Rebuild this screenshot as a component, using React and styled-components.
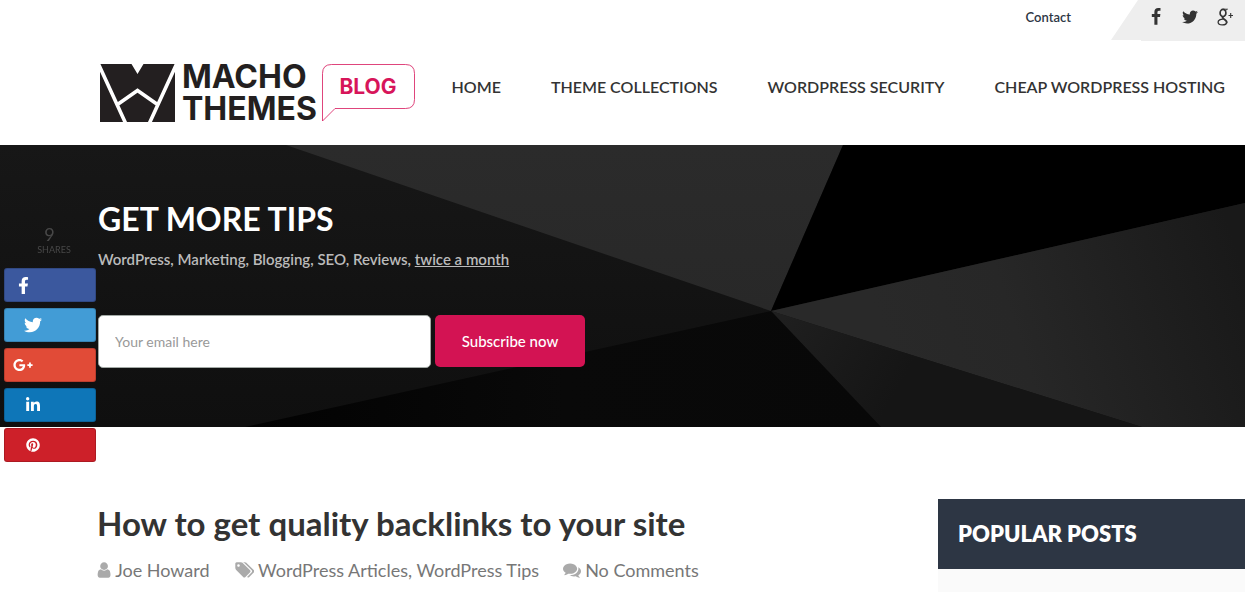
import React from "react";
import styled, { createGlobalStyle } from "styled-components";
import { FaFacebookF, FaTwitter, FaGooglePlusG, FaLinkedinIn, FaPinterest } from "react-icons/fa";

const GlobalStyle = createGlobalStyle`
  *, *::before, *::after { box-sizing: border-box; }
  body {
    margin: 0;
    background: #fff;
    color: #333;
    font-family: Lato, "Open Sans", sans-serif;
    overflow-x: hidden;
  }
  a { color: inherit; text-decoration: none; }
  h1, h2, p, ul { margin: 0; padding: 0; }
  ul { list-style: none; }
`;

const TopBar = styled.div`
  display: flex;
  justify-content: flex-end;
  align-items: flex-start;
  height: 41px;
`;

const ContactLink = styled.a`
  margin-right: 40px;
  font-size: 13px;
  line-height: 34px;
  font-weight: 600;
  color: #2d3644;
`;

const SocialStrip = styled.div`
  display: flex;
  align-items: center;
  gap: 12px;
  width: 134px;
  height: 41px;
  padding: 0 8px 7px 34px;
  background: #eee;
  clip-path: polygon(27px 0, 100% 0, 100% 100%, 30px 100%, 30px 40px, 0 40px);
`;

const SocialLink = styled.a`
  display: flex;
  justify-content: center;
  width: 22px;
  svg { width: 18px; height: 18px; fill: #333; }
`;

const Header = styled.header`
  display: flex;
  align-items: center;
  justify-content: space-between;
  height: 104px;
  padding: 0 20px 0 100px;
`;

const Logo = styled.a`
  display: flex;
  align-items: flex-start;
  padding-top: 2px;
`;

const LogoMark = styled.svg`
  width: 75px;
  height: 58px;
`;

const LogoName = styled.span`
  display: flex;
  flex-direction: column;
  width: 139px;
  margin-top: -3px;
  padding-left: 7px;
  font: 700 32px/32px Inter, sans-serif;
  color: #231f20;
`;

const BlogBubble = styled.svg`
  width: 93px;
  height: 58px;
  margin-left: 8px;
  text { font: 700 21px Inter, sans-serif; fill: #d7155a; }
`;

const Nav = styled.nav`
  display: flex;
  gap: 50px;
  font-size: 16px;
  line-height: 24px;
  font-weight: 600;
  white-space: nowrap;
  padding-bottom: 12px;
`;

const Hero = styled.section`
  position: relative;
  height: 282px;
  padding: 52px 98px 0;
  background: #131313;
  color: #fff;
`;

const HeroArt = styled.svg`
  position: absolute;
  inset: 0;
  width: 100%;
  height: 100%;
`;

const HeroBody = styled.div`
  position: relative;
`;

const HeroTitle = styled.h2`
  font-size: 32px;
  line-height: 44px;
  font-weight: 700;
`;

const HeroText = styled.p`
  margin-top: 6px;
  font-size: 15px;
  line-height: 24px;
  font-weight: 600;
  color: #bbb;
  a { text-decoration: underline; }
`;

const SubscribeForm = styled.form`
  display: flex;
  gap: 4px;
  margin-top: 44px;
`;

const EmailInput = styled.input`
  width: 333px;
  height: 53px;
  padding: 0 16px;
  border: 1px solid #a3aaa6;
  border-radius: 5px;
  background: #fff;
  font: 400 14px Lato, sans-serif;
  color: #333;
  &::placeholder { color: #999; opacity: 1; }
`;

const SubscribeButton = styled.button`
  width: 150px;
  height: 52px;
  border: 0;
  border-radius: 5px;
  background: #d31353;
  color: #fff;
  font: 500 15px Lato, sans-serif;
`;

const Main = styled.main`
  display: flex;
  justify-content: space-between;
  padding: 72px 0 0 97px;
`;

const PostTitle = styled.h1`
  font-size: 33px;
  line-height: 48px;
  font-weight: 700;
  color: #333;
`;

const PostMeta = styled.ul`
  display: flex;
  gap: 24px;
  margin-top: 11px;
  font-size: 18px;
  line-height: 24px;
  color: #777;
`;

const MetaItem = styled.li`
  display: flex;
  align-items: center;
  gap: 4px;
  svg { height: 18px; fill: #aaa; }
`;

const Sidebar = styled.aside`
  width: 307px;
  height: 93px;
  background: #fafafa;
`;

const SidebarTitle = styled.h2`
  padding-left: 20px;
  background: #2d3644;
  color: #fff;
  font-size: 22px;
  line-height: 70px;
  font-weight: 800;
`;

const ShareBar = styled.aside`
  position: fixed;
  left: 4px;
  top: 224px;
  width: 92px;
  display: flex;
  flex-direction: column;
  gap: 6px;
`;

const ShareCount = styled.div`
  display: flex;
  flex-direction: column;
  height: 38px;
  color: #484848;
  font-size: 9px;
  line-height: 12px;
  text-align: center;
  padding-left: 8px;
  strong { margin-right: 9px; font-size: 18px; line-height: 20px; font-weight: 400; }
`;

const ShareLink = styled.a`
  display: flex;
  align-items: center;
  height: 34px;
  padding-left: ${(p) => p.$indent}px;
  border: 1px solid rgba(0, 0, 0, 0.16);
  border-radius: 3px;
  background: ${(p) => p.$color};
  color: #fff;
`;

const FB = "M1343 12v264h-157q-86 0-116 36t-30 108v189h293l-39 296h-254v759h-306v-759h-255v-296h255v-218q0-186 104-288.5t277-102.5q147 0 228 12z";
const TW = "M1684 408q-67 98-162 167 1 14 1 42 0 130-38 259.5t-115.5 248.5-184.5 210.5-258 146-323 54.5q-271 0-496-145 35 4 78 4 225 0 401-138-105-2-188-64.5t-114-159.5q33 5 61 5 43 0 85-11-112-23-185.5-111.5t-73.5-205.5v-4q68 38 146 41-66-44-105-115t-39-154q0-88 44-163 121 149 294.5 238.5t371.5 99.5q-8-38-8-74 0-134 94.5-228.5t228.5-94.5q140 0 236 102 109-21 205-78-37 115-142 178 93-10 186-50z";
const USER = "M1536 1399q0 109-62.5 187t-150.5 78h-854q-88 0-150.5-78t-62.5-187q0-85 8.5-160.5t31.5-152 58.5-131 94-89 134.5-34.5q131 128 313 128t313-128q76 0 134.5 34.5t94 89 58.5 131 31.5 152 8.5 160.5zm-256-887q0 159-112.5 271.5t-271.5 112.5-271.5-112.5-112.5-271.5 112.5-271.5 271.5-112.5 271.5 112.5 112.5 271.5z";
const TAGS = "M576 448q0-53-37.5-90.5t-90.5-37.5-90.5 37.5-37.5 90.5 37.5 90.5 90.5 37.5 90.5-37.5 37.5-90.5zm1067 576q0 53-37 90l-491 492q-39 37-91 37-53 0-90-37l-715-716q-38-37-64.5-101t-26.5-117v-416q0-52 38-90t90-38h416q53 0 117 26.5t102 64.5l715 714q37 39 37 91zm384 0q0 53-37 90l-491 492q-39 37-91 37-36 0-59-14t-53-45l470-470q37-37 37-90 0-52-37-91l-715-714q-38-38-102-64.5t-117-26.5h224q53 0 117 26.5t102 64.5l715 714q37 39 37 91z";
const COMMENTS = "M1408 768q0 139-94 257t-256.5 186.5-353.5 68.5q-86 0-176-16-124 88-278 128-36 9-86 16h-3q-11 0-20.5-8t-11.5-21q-1-3-1-6.5t.5-6.5 2-6l2.5-5t3.5-5.5 4-5 4.5-5 4-4.5q5-6 23-25t26-29.5 22.5-29 25-38.5 20.5-44q-124-72-195-177t-71-224q0-139 94-257t256.5-186.5 353.5-68.5 353.5 68.5 256.5 186.5 94 257zm384 256q0 120-71 224.5t-195 176.5q10 24 20.5 44t25 38.5 22.5 29 26 29.5 23 25q1 1 4 4.5t4.5 5 4 5 3.5 5.5l2.5 5t2 6 .5 6.5-1 6.5q-3 14-13 22t-22 7q-50-7-86-16-154-40-278-128-90 16-176 16-271 0-472-132 58 4 88 4 161 0 309-45t264-129q125-92 192-212t67-254q0-77-23-152 129 71 204 178t75 230z";

const shares = [
  { label: "Facebook", color: "#3b589e", indent: 10, Icon: FaFacebookF, size: 17 },
  { label: "Twitter", color: "#429cd6", indent: 19, Icon: FaTwitter, size: 18 },
  { label: "Google Plus", color: "#e14b37", indent: 8, Icon: FaGooglePlusG, size: 20 },
  { label: "LinkedIn", color: "#0e76b8", indent: 20, Icon: FaLinkedinIn, size: 16 },
  { label: "Pinterest", color: "#cd2029", indent: 21, Icon: FaPinterest, size: 14 },
];

const navItems = ["HOME", "THEME COLLECTIONS", "WORDPRESS SECURITY", "CHEAP WORDPRESS HOSTING"];

function Facets() {
  return (
    <HeroArt viewBox="0 0 1245 282" preserveAspectRatio="none" aria-hidden="true">
      <defs>
        <linearGradient id="left" x1="0" y1="0" x2="0" y2="1">
          <stop offset="0" stopColor="#171717" />
          <stop offset="1" stopColor="#0f0f0f" />
        </linearGradient>
        <linearGradient id="top" x1="0" y1="0" x2="0" y2="1">
          <stop offset="0" stopColor="#2b2b2b" />
          <stop offset="1" stopColor="#282828" />
        </linearGradient>
        <linearGradient id="right" gradientUnits="userSpaceOnUse" x1="900" y1="240" x2="1245" y2="130">
          <stop offset="0" stopColor="#292929" />
          <stop offset="0.35" stopColor="#272727" />
          <stop offset="1" stopColor="#191919" />
        </linearGradient>
        <linearGradient id="low" gradientUnits="userSpaceOnUse" x1="771" y1="166" x2="900" y2="240">
          <stop offset="0" stopColor="#202020" />
          <stop offset="1" stopColor="#151515" />
        </linearGradient>
        <linearGradient id="floor" gradientUnits="userSpaceOnUse" x1="245" y1="0" x2="881" y2="0">
          <stop offset="0" stopColor="#020202" />
          <stop offset="0.5" stopColor="#090909" />
          <stop offset="1" stopColor="#080808" />
        </linearGradient>
      </defs>
      <rect width="1245" height="282" fill="url(#left)" />
      <path d="M286 0H843L771 166Z" fill="url(#top)" />
      <path d="M843 0H1245V58L771 166Z" fill="#000" />
      <path d="M771 166L1245 58V282H1142Z" fill="url(#right)" />
      <path d="M771 166L1142 282H881Z" fill="url(#low)" />
      <path d="M771 166L881 282H245Z" fill="url(#floor)" />
    </HeroArt>
  );
}

export default function App() {
  return (
    <>
      <GlobalStyle />
      <TopBar>
        <ContactLink href="#contact">Contact</ContactLink>
        <SocialStrip>
          <SocialLink href="#facebook" aria-label="Facebook">
            <svg viewBox="0 0 1792 1792"><path d={FB} /></svg>
          </SocialLink>
          <SocialLink href="#twitter" aria-label="Twitter">
            <svg viewBox="0 0 1792 1792"><path d={TW} /></svg>
          </SocialLink>
          <SocialLink href="#google" aria-label="Google Plus">
            <svg viewBox="-1 0 18 18">
              <g fill="none" stroke="#333">
                <ellipse cx="7" cy="5" rx="2.900" ry="3.600" strokeWidth="1.700" />
                <path d="M6.500 1.200H11.500L10 2.200H8.500" strokeWidth="0.900" />
                <path d="M7 8.600C6 9.500 6.800 10.200 8.200 11.200C10.500 12.600 11.200 13.500 10.600 15" strokeWidth="1.900" />
                <path d="M7.600 11.200C4.500 11 2 12.300 2.100 14.300C2.300 16.300 4.500 17 6.700 16.900C8.700 16.800 10.200 16.200 10.600 15" strokeWidth="1.300" />
                <path d="M12.500 7.500H17M14.700 5V10" strokeWidth="1.100" />
              </g>
            </svg>
          </SocialLink>
        </SocialStrip>
      </TopBar>
      <Header>
        <Logo href="#home">
          <LogoMark viewBox="0 0 75 58" aria-hidden="true">
            <path fill="#231f20" d="M0 0H31.500L37.500 10L43.500 0H75V58H0Z" />
            <path fill="none" stroke="#fff" strokeWidth="3.600" d="M-2 -1L25.500 59M77 -1L49.500 59M17.500 40.500L37.500 26.500L57.500 40.500" />
          </LogoMark>
          <LogoName><span>MACHO</span><span>THEMES</span></LogoName>
          <BlogBubble viewBox="0 0 93 58">
            <path fill="none" stroke="#d7155a" strokeWidth="0.800" d="M.5 57V9.500Q.5.5 9.500.5H83.500Q92.500.5 92.500 9.500V35.500Q92.500 44.500 83.500 44.500H13Z" />
            <text x="46" y="30" textAnchor="middle">BLOG</text>
          </BlogBubble>
        </Logo>
        <Nav>
          {navItems.map((item) => <a key={item} href="#nav">{item}</a>)}
        </Nav>
      </Header>
      <Hero>
        <Facets />
        <HeroBody>
          <HeroTitle>GET MORE TIPS</HeroTitle>
          <HeroText>WordPress, Marketing, Blogging, SEO, Reviews, <a href="#tips">twice a month</a></HeroText>
          <SubscribeForm onSubmit={(e) => e.preventDefault()}>
            <EmailInput type="email" placeholder="Your email here" aria-label="Your email here" />
            <SubscribeButton type="submit">Subscribe now</SubscribeButton>
          </SubscribeForm>
        </HeroBody>
      </Hero>
      <Main>
        <article>
          <PostTitle>How to get quality backlinks to your site</PostTitle>
          <PostMeta>
            <MetaItem>
              <svg viewBox="192 0 1408 1792"><path d={USER} /></svg>
              <a href="#author">Joe Howard</a>
            </MetaItem>
            <MetaItem>
              <svg viewBox="0 0 2048 1792"><path d={TAGS} /></svg>
              <span><a href="#articles">WordPress Articles</a>, <a href="#wp-tips">WordPress Tips</a></span>
            </MetaItem>
            <MetaItem>
              <svg viewBox="0 0 1792 1792"><path d={COMMENTS} /></svg>
              <a href="#comments">No Comments</a>
            </MetaItem>
          </PostMeta>
        </article>
        <Sidebar>
          <SidebarTitle>POPULAR POSTS</SidebarTitle>
        </Sidebar>
      </Main>
      <ShareBar>
        <ShareCount><strong>9</strong>SHARES</ShareCount>
        {shares.map(({ label, color, indent, Icon, size }) => (
          <ShareLink key={label} href="#share" aria-label={label} $color={color} $indent={indent}>
            <Icon size={size} />
          </ShareLink>
        ))}
      </ShareBar>
    </>
  );
}
